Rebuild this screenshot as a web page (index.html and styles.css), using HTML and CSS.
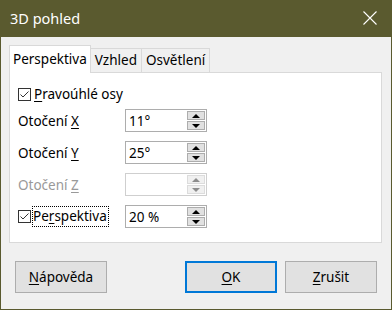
FILE: index.html
```html
<!DOCTYPE html>
<html lang="cs">
<head>
  <meta charset="UTF-8" />
  <title>3D pohled</title>
  <link rel="stylesheet" href="styles.css">
</head>
<body>

  <div class="dialog">

    <div class="title-bar">
      <div class="title">3D pohled</div>
      <div class="close">
        <svg width="14" height="14" viewBox="0 0 14 14">
          <path d="M0.5 0.5 L13.5 13.5 M13.5 0.5 L0.5 13.5" stroke="#fff" stroke-width="1.1" fill="none"/>
        </svg>
      </div>
    </div>

    <div class="dialog-body">
      <div class="tab-bar">
        <div class="tab active">Perspektiva</div>
        <div class="tab">Vzhled</div>
        <div class="tab">Osvětlení</div>
      </div>

      <div class="panel">
        <label class="check-row">
          <span class="checkbox">
            <svg width="11" height="11" viewBox="0 0 11 11"><path d="M1.5 5.5 L4 8 L9.5 2.5" stroke="#333" stroke-width="1" fill="none"/></svg>
          </span>
          <span><u>P</u>ravoúhlé osy</span>
        </label>

        <div class="field-row">
          <span class="label">Otočení <u>X</u></span>
          <div class="spin">
            <span class="value">11°</span>
            <div class="spin-btns">
              <span class="spin-btn"><i class="tri up"></i></span>
              <span class="spin-btn"><i class="tri down"></i></span>
            </div>
          </div>
        </div>

        <div class="field-row">
          <span class="label">Otočení <u>Y</u></span>
          <div class="spin">
            <span class="value">25°</span>
            <div class="spin-btns">
              <span class="spin-btn"><i class="tri up"></i></span>
              <span class="spin-btn"><i class="tri down"></i></span>
            </div>
          </div>
        </div>

        <div class="field-row disabled">
          <span class="label">Otočení <u>Z</u></span>
          <div class="spin">
            <span class="value"></span>
            <div class="spin-btns">
              <span class="spin-btn"><i class="tri up"></i></span>
              <span class="spin-btn"><i class="tri down"></i></span>
            </div>
          </div>
        </div>

        <div class="field-row">
          <label class="label check-label">
            <span class="checkbox">
              <svg width="11" height="11" viewBox="0 0 11 11"><path d="M1.5 5.5 L4 8 L9.5 2.5" stroke="#333" stroke-width="1" fill="none"/></svg>
            </span>
            <span class="focus">Pe<u>r</u>spektiva</span>
          </label>
          <div class="spin">
            <span class="value">20 %</span>
            <div class="spin-btns">
              <span class="spin-btn"><i class="tri up"></i></span>
              <span class="spin-btn"><i class="tri down"></i></span>
            </div>
          </div>
        </div>
      </div>

      <div class="button-bar">
        <button class="btn"><u>N</u>ápověda</button>
        <div class="right-btns">
          <button class="btn default"><u>O</u>K</button>
          <button class="btn"><u>Z</u>rušit</button>
        </div>
      </div>
    </div>

  </div>

</body>
</html>
```

FILE: styles.css
```css
* {
  box-sizing: border-box;
}

body {
  margin: 0;
  width: 392px;
  height: 310px;
  font-family: 'Noto Sans', 'Open Sans', sans-serif;
  font-size: 13.5px;
  color: #000;
  overflow: hidden;
}

u {
  text-decoration: underline;
  text-underline-offset: 2px;
}

.dialog {
  width: 392px;
  height: 310px;
  display: flex;
  flex-direction: column;
  background-color: #f0f0f0;
  border: 1px solid #5a5a2f;
  border-top: none;
}

.title-bar {
  height: 37px;
  flex: none;
  margin: 0 -1px;
  background-color: #5a5a2f;
  color: #fff;
  display: flex;
  align-items: center;
  justify-content: space-between;
  padding: 0 15px 0 10px;
}

.title {
  font-size: 14.5px;
  margin-top: -1px;
}

.close {
  display: flex;
  margin-top: -1px;
}

.dialog-body {
  flex: 1;
  display: flex;
  flex-direction: column;
  padding: 8px 9px 0 8px;
}

.tab-bar {
  display: flex;
  align-items: flex-end;
  height: 27px;
  position: relative;
  z-index: 1;
}

.tab {
  height: 24px;
  padding: 0 4px;
  line-height: 22px;
  border: 1px solid #d9d9d9;
  border-bottom: none;
  margin-left: -1px;
  background-color: #f0f0f0;
}

.tab.active {
  height: 28px;
  margin-left: 0;
  margin-bottom: -1px;
  padding: 0 3px;
  line-height: 27px;
  background-color: #fff;
}

.tab.active + .tab {
  margin-left: 0;
  border-left: none;
}

.panel {
  height: 171px;
  background-color: #fff;
  border: 1px solid #d9d9d9;
  padding: 13px 8px 0 8px;
  display: flex;
  flex-direction: column;
  gap: 9px;
}

.check-row {
  display: flex;
  align-items: center;
  gap: 3px;
  height: 16px;
  margin-bottom: -2px;
}

.checkbox {
  width: 13px;
  height: 13px;
  border: 1px solid #333;
  background: #fff;
  display: flex;
  align-items: center;
  justify-content: center;
  flex: none;
}

.field-row {
  display: flex;
  align-items: center;
  height: 23px;
}

.label {
  width: 107px;
}

.check-label {
  display: flex;
  align-items: center;
  gap: 2px;
}

.focus {
  outline: 1px dotted #000;
  padding: 0 1px 0 0;
  line-height: 19px;
}

.spin {
  width: 82px;
  height: 23px;
  border: 1px solid #adadad;
  background-color: #fff;
  display: flex;
  align-items: center;
  justify-content: space-between;
  padding: 0 1px 0 3px;
}

.spin-btns {
  display: flex;
  flex-direction: column;
  gap: 1px;
  padding: 1px 0;
}

.spin-btn {
  width: 18px;
  height: 9px;
  background-color: #e1e1e1;
  border: 1px solid #adadad;
  display: flex;
  align-items: center;
  justify-content: center;
}

.tri {
  width: 0;
  height: 0;
  border-left: 4px solid transparent;
  border-right: 4px solid transparent;
}

.tri.up {
  border-bottom: 4px solid #000;
}

.tri.down {
  border-top: 4px solid #000;
}

.disabled .label {
  color: #999;
}

.disabled .spin {
  border-color: #cfcfcf;
}

.disabled .spin-btn {
  background-color: #f0f0f0;
  border-color: #dcdcdc;
}

.disabled .tri.up {
  border-bottom-color: #8d8d8d;
}

.disabled .tri.down {
  border-top-color: #8d8d8d;
}

.button-bar {
  display: flex;
  justify-content: space-between;
  padding: 18px 5px 0 6px;
}

.right-btns {
  display: flex;
  gap: 8px;
}

.btn {
  width: 92px;
  height: 32px;
  font-family: 'Noto Sans', 'Open Sans', sans-serif;
  font-size: 13.5px;
  background-color: #e1e1e1;
  border: 1px solid #adadad;
  color: #000;
  padding: 0;
}

.btn.default {
  border: 2px solid #0078d7;
}
```
